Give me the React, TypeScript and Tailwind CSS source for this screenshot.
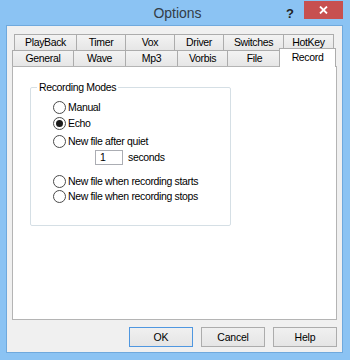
const font = { fontFamily: '"Liberation Sans", Arial, sans-serif' };

function Radio({ label, checked = false }: { label: string; checked?: boolean }) {
  return (
    <div className="flex items-center h-[14px]">
      <span className="w-[13px] h-[13px] rounded-full border border-[#4a4a4a] bg-white flex items-center justify-center">
        {checked && <span className="w-[7px] h-[7px] rounded-full bg-[#1b1b1b]" />}
      </span>
      <span className="ml-[2px] text-[10.5px] tracking-[-0.35px] text-black leading-none">{label}</span>
    </div>
  );
}

function Tab({ label, w, first = false }: { label: string; w: string; first?: boolean }) {
  return (
    <div
      className={`${w} ${first ? '' : '-ml-px'} h-full border border-b-0 border-[#acacac] bg-gradient-to-b from-[#f3f3f3] to-[#e6e6e6] flex items-center justify-center text-[10.5px] tracking-[-0.35px] text-black leading-none`}
    >
      {label}
    </div>
  );
}

export default function App() {
  return (
    <div className="w-[350px] h-[360px] bg-[#8bc3f3] flex flex-col pl-[6px] pb-[7px] pr-[7px]" style={font}>
      {/* title bar */}
      <div className="h-[26px] flex items-start relative">
        <div className="flex-1 h-full flex items-center justify-center text-[14px] text-[#333d47] pl-[6px] pt-[1px]">Options</div>
        <div className="absolute right-[49px] top-[4px] text-[13px] font-bold text-[#222]">?</div>
        <div className="absolute right-0 top-[1px] w-[39px] h-[18px] bg-[#c75050] flex items-center justify-center">
          <svg width="9" height="8" viewBox="0 0 9 8">
            <path d="M1 0.5 L8 7.5 M8 0.5 L1 7.5" stroke="white" strokeWidth="1.8" />
          </svg>
        </div>
      </div>

      {/* client area */}
      <div className="flex-1 border border-[#6fa9dd] bg-[#f0f0f0] flex flex-col pt-[8px] pl-[5px] pr-[5px] pb-[5px]">
        {/* tabs row 1 */}
        <div className="flex h-[16px] ml-[2px]">
          <Tab label="PlayBack" w="w-[63px]" first />
          <Tab label="Timer" w="w-[50px]" />
          <Tab label="Vox" w="w-[50px]" />
          <Tab label="Driver" w="w-[50px]" />
          <Tab label="Switches" w="w-[61px]" />
          <Tab label="HotKey" w="w-[51px]" />
        </div>
        {/* tabs row 2 */}
        <div className="flex h-[16px] items-end relative z-10">
          <Tab label="General" w="w-[62px]" first />
          <Tab label="Wave" w="w-[53px]" />
          <Tab label="Mp3" w="w-[53px]" />
          <Tab label="Vorbis" w="w-[51px]" />
          <Tab label="File" w="w-[55px]" />
          <div className="w-[57px] h-[19px] -ml-[3px] -mb-px border border-b-0 border-[#acacac] bg-white flex items-start justify-center pt-[3px] text-[10.5px] tracking-[-0.35px] text-black leading-none">
            Record
          </div>
        </div>

        {/* panel */}
        <div className="w-[325px] h-[254px] border border-[#b4b4b4] bg-white pl-[17px] pt-[14px]">
          <fieldset className="w-[201px] h-[145px] border border-[#d5dfe5] rounded-[2px] pl-[22px]">
            <legend className="ml-[-16px] px-[2px] text-[10.5px] tracking-[-0.35px] text-black leading-[12px]">
              Recording Modes
            </legend>
            <div className="flex flex-col mt-[7px]">
              <Radio label="Manual" />
              <div className="mt-[2px]">
                <Radio label="Echo" checked />
              </div>
              <div className="mt-[4px]">
                <Radio label="New file after quiet" />
              </div>
              <div className="flex items-center mt-[2px] ml-[42px] h-[15px]">
                <div className="w-[28px] h-[15px] border border-[#abadb3] bg-white pl-[4px] flex items-center text-[10.5px] leading-none">
                  1
                </div>
                <span className="ml-[5px] text-[10.5px] tracking-[-0.35px] leading-none">seconds</span>
              </div>
              <div className="mt-[9px]">
                <Radio label="New file when recording starts" />
              </div>
              <div className="mt-[1px]">
                <Radio label="New file when recording stops" />
              </div>
            </div>
          </fieldset>
        </div>

        {/* buttons */}
        <div className="flex justify-end gap-[8px] mt-[7px]">
          <button className="w-[64px] h-[20px] border border-[#4f97e0] bg-gradient-to-b from-[#f0f0f0] to-[#e5e5e5] text-[10.5px] tracking-[-0.2px] leading-none text-black">
            OK
          </button>
          <button className="w-[64px] h-[20px] border border-[#acacac] bg-gradient-to-b from-[#f0f0f0] to-[#e5e5e5] text-[10.5px] tracking-[-0.2px] leading-none text-black">
            Cancel
          </button>
          <button className="w-[64px] h-[20px] border border-[#acacac] bg-gradient-to-b from-[#f0f0f0] to-[#e5e5e5] text-[10.5px] tracking-[-0.2px] leading-none text-black">
            Help
          </button>
        </div>
      </div>
    </div>
  );
}
